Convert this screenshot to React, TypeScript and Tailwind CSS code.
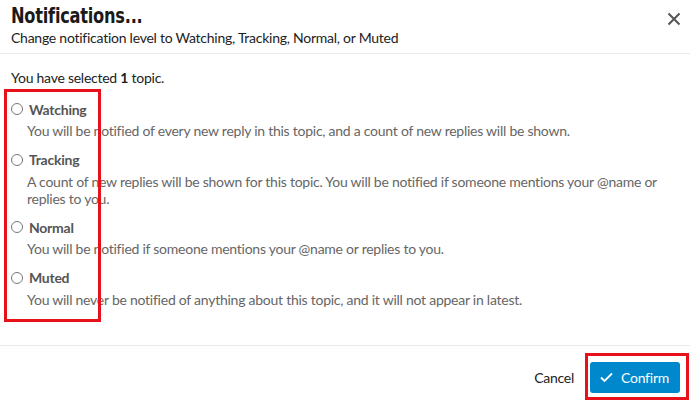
import React from "react";

const options = [
  { label: "Watching", desc: ["You will be notified of every new reply in this topic, and a count of new replies will be shown."] },
  { label: "Tracking", desc: ["A count of new replies will be shown for this topic. You will be notified if someone mentions your @name or", "replies to you."] },
  { label: "Normal", desc: ["You will be notified if someone mentions your @name or replies to you."] },
  { label: "Muted", desc: ["You will never be notified of anything about this topic, and it will not appear in latest."] },
];

export default function App() {
  return (
    <div className="relative w-[690px] h-[400px] bg-white overflow-hidden text-[#222] tracking-[-0.25px]" style={{ fontFamily: "Lato, 'Noto Sans', sans-serif" }}>
      <div className="flex items-start justify-between h-[54px] border-b border-[#e9e9e9] pl-[11px] pr-[9px]">
        <div className="flex flex-col">
          <div className="text-[22px] leading-[26px] font-bold tracking-[-0.3px] mt-[3px] origin-left scale-x-[0.82] text-[#1a1a1a]" style={{ fontFamily: "'Liberation Sans Narrow', 'DejaVu Sans Condensed', sans-serif" }}>Notifications...</div>
          <div className="text-[14px] leading-[17px]">Change notification level to Watching, Tracking, Normal, or Muted</div>
        </div>
        <svg width="14" height="14" viewBox="0 0 14 14" className="mt-[12px]">
          <path d="M1.5 1.5 L12.5 12.5 M12.5 1.5 L1.5 12.5" stroke="#555" strokeWidth="2" />
        </svg>
      </div>
      <div className="flex flex-col pl-[11px] pt-[15px] text-[14px]">
        <div className="leading-[17px]">You have selected <b>1</b> topic.</div>
        <div className="flex flex-col gap-[10.5px] mt-[13px]">
          {options.map((o) => (
            <div key={o.label} className="flex flex-col">
              <div className="flex items-center gap-[6px] h-[20px]">
                <span className="w-[12px] h-[12px] rounded-full border border-[#777] bg-white" />
                <span className="font-bold text-[14px] text-[#555]">{o.label}</span>
              </div>
              <div className="pl-[16px] mt-[3px] text-[#666] leading-[17px]">
                {o.desc.map((d) => (
                  <div key={d}>{d}</div>
                ))}
              </div>
            </div>
          ))}
        </div>
      </div>
      <div className="absolute left-0 right-0 top-[345px] border-t border-[#e9e9e9]" />
      <div className="absolute right-[10px] top-[362px] flex items-center gap-[16px]">
        <span className="text-[14px] text-[#222]">Cancel</span>
        <button className="flex items-center gap-[8px] bg-[#0088cc] text-white text-[14px] h-[31px] pl-[10px] pr-[11px] rounded-[3px]">
          <svg width="13" height="11" viewBox="0 0 13 11"><path d="M1 5.5 L4.5 9 L12 1.5" stroke="white" strokeWidth="1.8" fill="none" /></svg>
          Confirm
        </button>
      </div>
      <div className="absolute left-[4px] top-[89px] w-[97px] h-[233px] border-[3px] border-[#e8101a]" />
      <div className="absolute left-[585px] top-[353px] w-[104px] h-[47px] border-[3px] border-[#e8101a]" />
    </div>
  );
}
